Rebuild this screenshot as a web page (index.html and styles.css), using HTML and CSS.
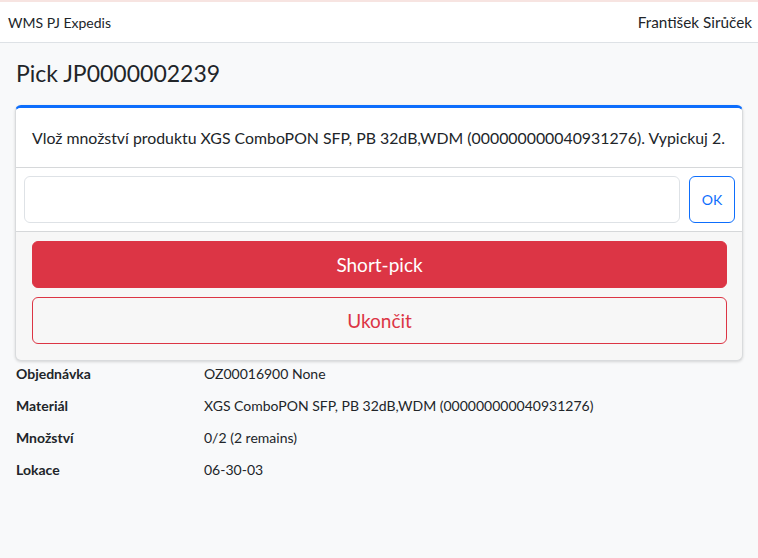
FILE: index.html
```html
<!DOCTYPE html>
<html lang="cs">
<head>
<meta charset="utf-8">
<title>WMS PJ Expedis</title>
<link rel="stylesheet" href="styles.css">
</head>
<body>
<header class="topbar">
  <span class="brand">WMS PJ Expedis</span>
  <span class="user">František Sirůček</span>
</header>
<main class="page">
  <h1 class="title">Pick JP0000002239</h1>
  <section class="card">
    <div class="card-head">Vlož množství produktu XGS ComboPON SFP, PB 32dB,WDM (000000000040931276). Vypickuj 2.</div>
    <div class="card-input">
      <input class="field" type="text">
      <button class="btn-ok">OK</button>
    </div>
    <div class="card-foot">
      <button class="btn btn-danger">Short-pick</button>
      <button class="btn btn-outline">Ukončit</button>
    </div>
  </section>
  <table class="info">
    <tr><th>Objednávka</th><td>OZ00016900 None</td></tr>
    <tr><th>Materiál</th><td>XGS ComboPON SFP, PB 32dB,WDM (000000000040931276)</td></tr>
    <tr><th>Množství</th><td>0/2 (2 remains)</td></tr>
    <tr><th>Lokace</th><td>06-30-03</td></tr>
  </table>
</main>
</body>
</html>
```
FILE: styles.css
```css
* { box-sizing: border-box; }
body {
  margin: 0;
  background: #f8f9fa;
  color: #212529;
  font-family: Lato, "Noto Sans", sans-serif;
}
.topbar {
  display: flex;
  justify-content: space-between;
  align-items: center;
  height: 43px;
  padding: 0 6px 0 8px;
  background: #fff;
  border-top: 2px solid #f7e4e1;
  border-bottom: 1px solid #dee2e6;
  font-size: 15.3px;
}
.brand { font-size: 14px; }
.page { padding: 0 15px; }
.title {
  margin: 0;
  padding: 18px 0 20px 1px;
  font-size: 23px;
  font-weight: 400;
  line-height: 24px;
}
.card {
  border: 1px solid #d9dbdd;
  border-top: 3px solid #0d6efd;
  border-radius: 6px;
  box-shadow: 0 1px 3px rgba(0,0,0,.15);
  overflow: hidden;
  background: #f7f7f7;
  margin-bottom: -3px;
  position: relative;
}
.card-head {
  background: #fff;
  height: 60px;
  padding: 0 16px;
  display: flex;
  align-items: center;
  font-size: 15.85px;
  white-space: nowrap;
  border-bottom: 1px solid #d6d8da;
}
.card-input {
  background: #fff;
  display: flex;
  gap: 9px;
  padding: 8px 7px 8px 8px;
  border-bottom: 1px solid #d6d8da;
}
.field {
  flex: 1;
  height: 47px;
  border: 1px solid #dee2e6;
  border-radius: 6px;
  font: inherit;
}
.btn-ok {
  width: 46px;
  height: 47px;
  border: 1px solid #0d6efd;
  border-radius: 6px;
  background: #fff;
  color: #0d6efd;
  font-family: inherit;
  font-size: 14px;
}
.card-foot {
  display: flex;
  flex-direction: column;
  gap: 9px;
  padding: 9px 15px 16px 16px;
}
.btn {
  height: 47px;
  border-radius: 6px;
  font-family: inherit;
  font-size: 19px;
}
.btn-danger {
  background: #dc3545;
  border: 1px solid #dc3545;
  color: #fff;
}
.btn-outline {
  background: transparent;
  border: 1px solid #dc3545;
  color: #dc3545;
}
.info {
  border-collapse: collapse;
  font-size: 14px;
  margin-left: 1px;
}
.info th {
  text-align: left;
  font-weight: 700;
  width: 188px;
  padding: 6px 0;
  line-height: 20px;
}
.info td {
  padding: 6px 0;
  line-height: 20px;
}
```
